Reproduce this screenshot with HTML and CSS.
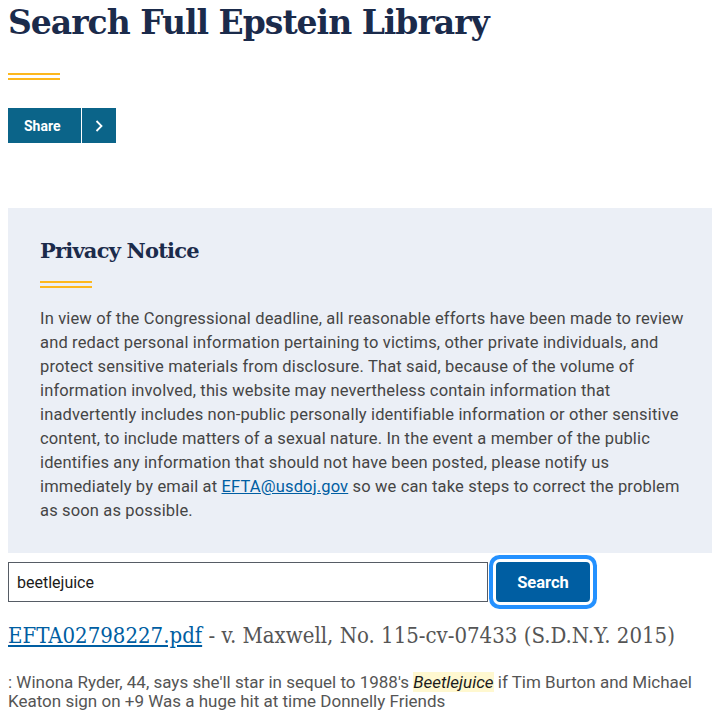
FILE: index.html
```html
<!DOCTYPE html>
<html lang="en">
<head>
<meta charset="utf-8">
<title>Search Full Epstein Library</title>
<link rel="stylesheet" href="styles.css">
</head>
<body>
<main class="page">
  <h1 class="title">Search Full Epstein Library</h1>
  <div class="rule"></div>
  <div class="share">
    <span class="share-label">Share</span>
    <span class="share-arrow"><svg width="10" height="14" viewBox="0 0 10 14"><path d="M2.5 2 L7.5 7 L2.5 12" fill="none" stroke="#fff" stroke-width="1.8"/></svg></span>
  </div>
  <section class="notice">
    <h2 class="notice-title">Privacy Notice</h2>
    <div class="rule"></div>
    <p class="notice-text">In view of the Congressional deadline, all reasonable efforts have been made to review and redact personal information pertaining to victims, other private individuals, and protect sensitive materials from disclosure. That said, because of the volume of information involved, this website may nevertheless contain information that inadvertently includes non-public personally identifiable information or other sensitive content, to include matters of a sexual nature. In the event a member of the public identifies any information that should not have been posted, please notify us immediately by email at <a href="#" class="link">EFTA@usdoj.gov</a> so we can take steps to correct the problem as soon as possible.</p>
  </section>
  <form class="search">
    <input class="search-input" type="text" value="beetlejuice">
    <button class="search-btn" type="button">Search</button>
  </form>
  <div class="result">
    <h3 class="result-title"><a href="#" class="result-link">EFTA02798227.pdf</a> - v. Maxwell, No. 115-cv-07433 (S.D.N.Y. 2015)</h3>
    <p class="result-snippet">: Winona Ryder, 44, says she'll star in sequel to 1988's <em class="hl">Beetlejuice</em> if Tim Burton and Michael Keaton sign on +9 Was a huge hit at time Donnelly Friends</p>
  </div>
</main>
</body>
</html>
```
FILE: styles.css
```css
* { box-sizing: border-box; }
html, body { margin: 0; padding: 0; background: #fff; }
body { font-family: Roboto, "Liberation Sans", sans-serif; color: #454545; }
.page { padding: 0 8px; }
.title {
  font-family: "DejaVu Serif", serif;
  font-weight: bold;
  font-size: 33px;
  letter-spacing: -1px;
  line-height: 46px;
  color: #1b2b4b;
  margin: 0;
}
.rule {
  width: 52px;
  height: 7px;
  border-top: 2px solid #fdb81e;
  border-bottom: 2px solid #fdb81e;
  margin-top: 27px;
}
.share {
  display: inline-flex;
  height: 35px;
  margin-top: 28px;
  background: #0b6489;
  color: #fff;
  align-items: stretch;
}
.share-label {
  display: flex;
  align-items: center;
  padding: 0 16px;
  font-size: 14px;
  font-weight: bold;
  border-right: 1px solid #fff;
  width: 74px;
}
.share-arrow {
  display: flex;
  align-items: center;
  justify-content: center;
  width: 34px;
}
.notice {
  margin-top: 65px;
  background: #ebeff6;
  padding: 28px 24px 30px 32px;
}
.notice-title {
  font-family: "DejaVu Serif", serif;
  font-weight: bold;
  font-size: 21px;
  letter-spacing: -0.8px;
  line-height: 30px;
  color: #1b2b4b;
  margin: 0;
}
.notice .rule { margin-top: 15px; }
.notice-text {
  margin: 19px 0 0;
  font-size: 16.5px;
  letter-spacing: 0.15px;
  line-height: 24px;
  color: #454545;
}
.link { color: #005ea2; text-decoration: underline; }
.search {
  display: flex;
  align-items: center;
  margin-top: 9px;
  gap: 8px;
}
.search-input {
  width: 480px;
  height: 40px;
  border: 1px solid #565c65;
  padding: 0 8px;
  font-family: Roboto, sans-serif;
  font-size: 16px;
  color: #1b1b1b;
  border-radius: 0;
}
.search-btn {
  width: 94px;
  height: 40px;
  background: #005ea2;
  color: #fff;
  border: 0;
  border-radius: 4px;
  font-family: Roboto, sans-serif;
  font-weight: bold;
  font-size: 16.5px;
  box-shadow: 0 0 0 3px #fff, 0 0 0 7px #2491ff;
}
.result-title {
  margin: 18px 0 0;
  font-family: "DejaVu Serif", serif;
  font-stretch: condensed;
  font-weight: normal;
  font-size: 22px;
  line-height: 32px;
  color: #555;
}
.result-link { color: #005ea2; text-decoration: underline; }
.result-snippet {
  margin: 21px 0 0;
  font-size: 17px;
  line-height: 19px;
  color: #555;
}
.hl { background: #fff8d0; color: #1b1b1b; font-style: italic; }
```
